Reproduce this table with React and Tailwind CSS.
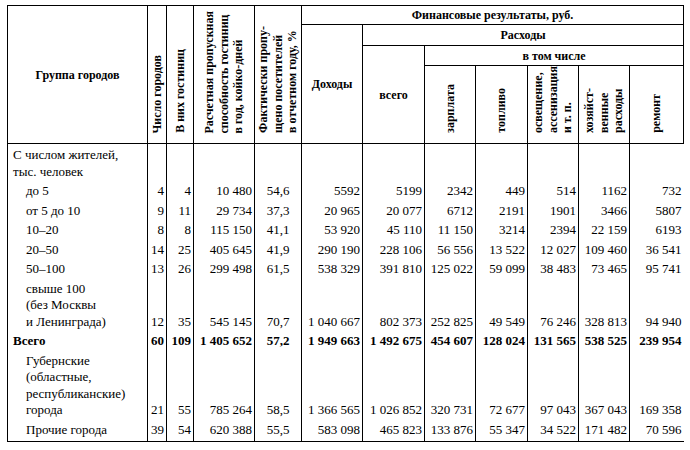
import React from 'react'

const rows = [
  { label: ['С числом жителей,', 'тыс. человек'], indent: false, vals: null },
  { label: ['до 5'], indent: true, vals: ['4', '4', '10 480', '54,6', '5592', '5199', '2342', '449', '514', '1162', '732'] },
  { label: ['от 5 до 10'], indent: true, vals: ['9', '11', '29 734', '37,3', '20 965', '20 077', '6712', '2191', '1901', '3466', '5807'] },
  { label: ['10–20'], indent: true, vals: ['8', '8', '115 150', '41,1', '53 920', '45 110', '11 150', '3214', '2394', '22 159', '6193'] },
  { label: ['20–50'], indent: true, vals: ['14', '25', '405 645', '41,9', '290 190', '228 106', '56 556', '13 522', '12 027', '109 460', '36 541'] },
  { label: ['50–100'], indent: true, vals: ['13', '26', '299 498', '61,5', '538 329', '391 810', '125 022', '59 099', '38 483', '73 465', '95 741'] },
  { label: ['свыше 100', '(без Москвы', 'и Ленинграда)'], indent: true, vals: ['12', '35', '545 145', '70,7', '1 040 667', '802 373', '252 825', '49 549', '76 246', '328 813', '94 940'] },
  { label: ['Всего'], indent: false, bold: true, vals: ['60', '109', '1 405 652', '57,2', '1 949 663', '1 492 675', '454 607', '128 024', '131 565', '538 525', '239 954'] },
  { label: ['Губернские', '(областные,', 'республиканские)', 'города'], indent: true, vals: ['21', '55', '785 264', '58,5', '1 366 565', '1 026 852', '320 731', '72 677', '97 043', '367 043', '169 358'] },
  { label: ['Прочие города'], indent: true, vals: ['39', '54', '620 388', '55,5', '583 098', '465 823', '133 876', '55 347', '34 522', '171 482', '70 596'] },
]

const Vert = ({ children }) => (
  <div className="inline-block [writing-mode:vertical-rl] rotate-180 whitespace-nowrap text-left leading-[14.5px]">
    {children}
  </div>
)

const th = 'border border-black p-0 font-bold'
const vth = 'border border-black p-0 pb-[5px] font-bold align-bottom text-center'

export default function App() {
  return (
    <div className="w-[690px] h-[450px] bg-white pt-[5px] pl-[7px] font-serif text-black">
      <table className="border-collapse table-fixed w-[677px] font-[Liberation_Serif,Times_New_Roman,serif]">
        <colgroup>
          <col className="w-[140px]" />
          <col className="w-[19px]" />
          <col className="w-[27px]" />
          <col className="w-[61px]" />
          <col className="w-[47px]" />
          <col className="w-[61px]" />
          <col className="w-[62px]" />
          <col className="w-[51px]" />
          <col className="w-[52px]" />
          <col className="w-[51px]" />
          <col className="w-[51px]" />
          <col className="w-[54px]" />
        </colgroup>
        <thead className="text-[12px]">
          <tr className="h-[19px]">
            <th rowSpan={4} className={th + ' align-middle text-center'}>Группа городов</th>
            <th rowSpan={4} className={vth}><Vert>Число городов</Vert></th>
            <th rowSpan={4} className={vth}><Vert>В них гостиниц</Vert></th>
            <th rowSpan={4} className={vth}>
              <Vert>Расчетная пропускная<br />способность гостиниц<br />в год, койко-дней</Vert>
            </th>
            <th rowSpan={4} className={vth}>
              <Vert>Фактически пропу-<br />щено посетителей<br />в отчетном году, %</Vert>
            </th>
            <th colSpan={7} className={th + ' text-center'}>Финансовые результаты, руб.</th>
          </tr>
          <tr className="h-[21px]">
            <th rowSpan={3} className={th + ' align-middle text-center'}>Доходы</th>
            <th colSpan={6} className={th + ' text-center'}>Расходы</th>
          </tr>
          <tr className="h-[20px]">
            <th rowSpan={2} className={th + ' align-middle text-center'}>всего</th>
            <th colSpan={5} className={th + ' text-center'}>в том числе</th>
          </tr>
          <tr className="h-[78px]">
            <th className={vth}><Vert>зарплата</Vert></th>
            <th className={vth}><Vert>топливо</Vert></th>
            <th className={vth}><Vert>освещение,<br />ассенизация<br />и т. п.</Vert></th>
            <th className={vth}><Vert>хозяйст-<br />венные<br />расходы</Vert></th>
            <th className={vth}><Vert>ремонт</Vert></th>
          </tr>
        </thead>
        <tbody className="text-[13px] leading-[16.5px]">
          {rows.map((r, i) => {
            const last = i === rows.length - 1
            const bb = last ? ' border-b border-black pb-[3px]' : ''
            return (
              <tr key={i} className={r.bold ? 'font-bold' : ''}>
                <td className={'border-l border-black pt-[3px] align-bottom whitespace-nowrap ' + (r.indent ? 'pl-[18px]' : 'pl-[5px]') + bb}>
                  {r.label.map((l, j) => (
                    <div key={j}>{l}</div>
                  ))}
                </td>
                {Array.from({ length: 11 }).map((_, k) => (
                  <td
                    key={k}
                    className={
                      'border-l border-black pt-[3px] align-bottom whitespace-nowrap ' +
                      (k === 3 ? 'text-center' : 'text-right pr-[2px]') +
                      bb
                    }
                  >
                    {r.vals ? r.vals[k] : ''}
                  </td>
                ))}
              </tr>
            )
          })}
        </tbody>
      </table>
    </div>
  )
}
